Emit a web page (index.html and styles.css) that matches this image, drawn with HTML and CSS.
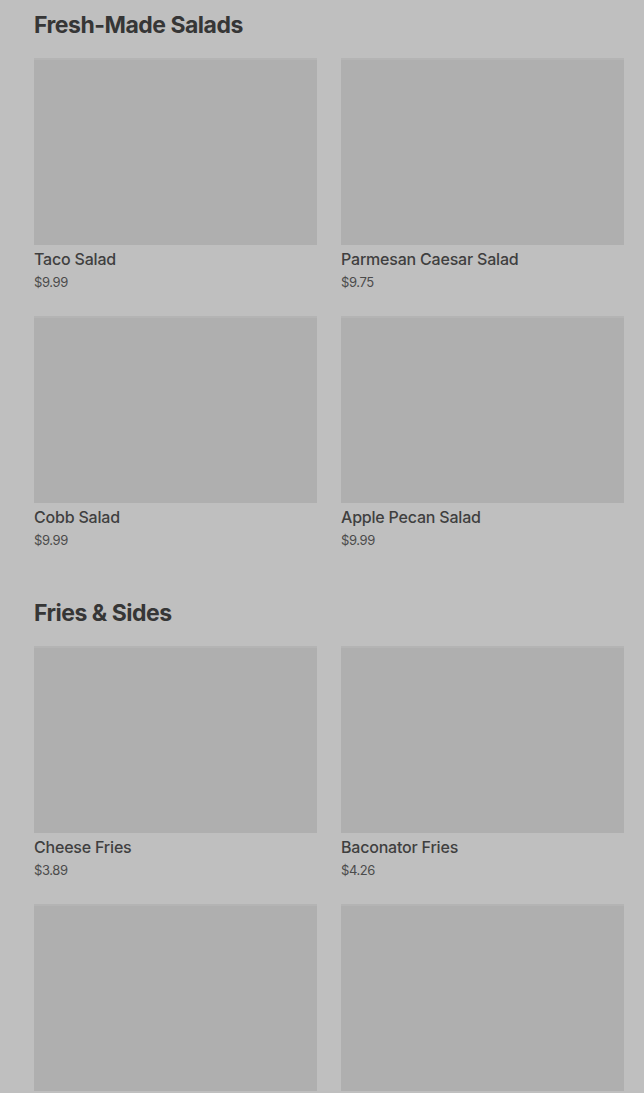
FILE: index.html
```html
<!DOCTYPE html>
<html lang="en">
<head>
  <meta charset="UTF-8" />
  <meta name="viewport" content="width=device-width, initial-scale=1.0"/>
  <title>Menu</title>
  <link rel="stylesheet" href="styles.css">
</head>
<body>
  <div class="menu">
    <section class="category">
      <h2>Fresh-Made Salads</h2>
      <div class="grid">
        <div class="item">
          <div class="thumb"></div>
          <div class="name">Taco Salad</div>
          <div class="price">$9.99</div>
        </div>
        <div class="item">
          <div class="thumb"></div>
          <div class="name">Parmesan Caesar Salad</div>
          <div class="price">$9.75</div>
        </div>
        <div class="item">
          <div class="thumb"></div>
          <div class="name">Cobb Salad</div>
          <div class="price">$9.99</div>
        </div>
        <div class="item">
          <div class="thumb"></div>
          <div class="name">Apple Pecan Salad</div>
          <div class="price">$9.99</div>
        </div>
      </div>
    </section>

    <section class="category">
      <h2>Fries &amp; Sides</h2>
      <div class="grid">
        <div class="item">
          <div class="thumb"></div>
          <div class="name">Cheese Fries</div>
          <div class="price">$3.89</div>
        </div>
        <div class="item">
          <div class="thumb"></div>
          <div class="name">Baconator Fries</div>
          <div class="price">$4.26</div>
        </div>
        <!-- next row continues below the fold -->
        <div class="item">
          <div class="thumb"></div>
        </div>
        <div class="item">
          <div class="thumb"></div>
        </div>
      </div>
    </section>
  </div>
</body>
</html>
```

FILE: styles.css
```css
:root {
  --page-bg: #bfbfbf;
  --thumb-bg: #afafaf;
  --heading: #363636;
  --text: #3f3f3f;
  --muted: #4b4b4b;
}

body {
  margin: 0;
  background: var(--page-bg);
  font-family: Inter, 'Liberation Sans', sans-serif;
  color: var(--text);
  overflow: hidden;
}

.menu {
  padding: 9px 20px 0 34px;
}

.category + .category {
  margin-top: 47px;
}

h2 {
  margin: 0 0 17px;
  font-size: 23px;
  line-height: 32px;
  font-weight: 700;
  letter-spacing: -0.5px;
  color: var(--heading);
}

.grid {
  display: grid;
  grid-template-columns: 1fr 1fr;
  column-gap: 24px;
  row-gap: 24px;
}

.thumb {
  height: 187px;
  background: var(--thumb-bg);
  border-top: 2px solid #b4b4b4;
  box-sizing: border-box;
}

.name {
  margin-top: 4px;
  font-size: 16px;
  line-height: 20px;
  font-weight: 500;
  letter-spacing: -0.2px;
  color: var(--text);
}

.price {
  margin-top: 3px;
  font-size: 13px;
  line-height: 20px;
  color: var(--muted);
  letter-spacing: -0.4px;
}
```
